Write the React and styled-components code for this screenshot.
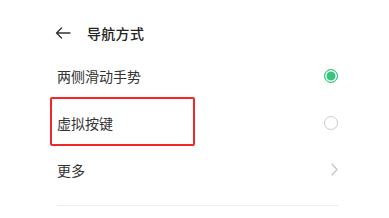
import React from 'react';
import styled, { createGlobalStyle } from 'styled-components';

const GlobalStyle = createGlobalStyle`
    html, body {
        margin: 0;
        padding: 0;
        background: #ffffff;
    }
    body {
        font-family: "Noto Sans CJK SC", "Noto Sans", sans-serif;
        color: #333;
    }
`;

const options = [
    { label: '两侧滑动手势', type: 'radio', checked: true },
    { label: '虚拟按键', type: 'radio', checked: false, highlight: true },
    { label: '更多', type: 'link' },
];

function App() {
    return (
        <Page>
            <GlobalStyle />
            <Header>
                <BackButton aria-label="返回">
                    <svg width="16" height="12" viewBox="0 0 16 12" fill="none">
                        <path d="M15 6H1.5M6.5 1L1.5 6l5 5" stroke="#333" strokeWidth="1.3" strokeLinecap="round" strokeLinejoin="round" />
                    </svg>
                </BackButton>
                <Title>导航方式</Title>
            </Header>
            <List>
                {options.map((o) => (
                    <Row key={o.label}>
                        <Label>{o.label}</Label>
                        {o.type === 'radio' ? (
                            <Radio checked={o.checked} />
                        ) : (
                            <svg width="7" height="13" viewBox="0 0 7 13" fill="none">
                                <path d="M1 1l5 5.5L1 12" stroke="#c4c4c4" strokeWidth="1.2" strokeLinecap="round" strokeLinejoin="round" />
                            </svg>
                        )}
                        {o.highlight && <Highlight />}
                    </Row>
                ))}
            </List>
            <Divider />
        </Page>
    );
}
export default App;

const Page = styled.div`
    width: 389px;
    height: 218px;
    box-sizing: border-box;
    padding: 0 51px 0 57px;
    overflow: hidden;
`;

const Header = styled.div`
    height: 52px;
    box-sizing: border-box;
    padding-top: 15px;
    padding-bottom: 2px;
    display: flex;
    align-items: center;
    gap: 16px;
`;

const BackButton = styled.div`
    display: flex;
    align-items: center;
    margin-left: -2px;
    width: 16px;
`;

const Title = styled.div`
    font-size: 14px;
    font-weight: 500;
    color: #222;
    letter-spacing: 0.3px;
`;

const List = styled.div`
    display: flex;
    flex-direction: column;
`;

const Row = styled.div`
    position: relative;
    height: 47px;
    display: flex;
    align-items: center;
    justify-content: space-between;
`;

const Label = styled.div`
    font-size: 14px;
    color: #333;
`;

const Radio = styled.span`
    box-sizing: border-box;
    width: 14px;
    height: 14px;
    border-radius: 50%;
    border: ${({ checked }) => (checked ? '1.5px solid #34c57e' : '1px solid #cccccc')};
    background: ${({ checked }) => (checked ? '#34c57e' : '#fff')};
    box-shadow: ${({ checked }) => (checked ? 'inset 0 0 0 1.5px #fff' : 'none')};
`;

const Highlight = styled.div`
    position: absolute;
    left: -7px;
    top: -2px;
    width: 145px;
    height: 49px;
    box-sizing: border-box;
    border: 2px solid #f5262a;
    border-radius: 2px;
    pointer-events: none;
`;

const Divider = styled.div`
    margin-top: 12px;
    height: 1px;
    background: #eeeeee;
`;
